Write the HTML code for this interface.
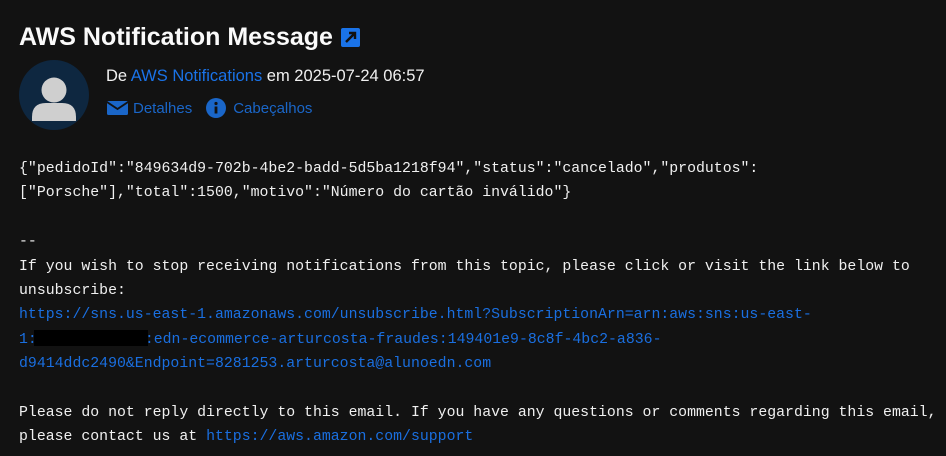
<!DOCTYPE html>
<html><head><meta charset="utf-8"><style>
body{margin:0;background:#121212;width:946px;height:456px;overflow:hidden;font-family:"Liberation Sans",sans-serif;color:#f0f0f0}
h1{position:absolute;left:19px;top:20px;margin:0;font-size:25px;font-weight:bold;color:#fafafa;line-height:34px}
.ext{display:inline-block;vertical-align:middle;margin-left:8px;position:relative;top:-1px}
.av{position:absolute;left:19px;top:60px;width:70px;height:70px;border-radius:50%;background:#0e2740;overflow:hidden}
.meta{position:absolute;left:106px;top:67px;font-size:16.5px;color:#f0f0f0}
.blue{color:#1a73e8}
.links{position:absolute;left:107px;top:98px;font-size:15px;color:#1a66c8;display:flex;align-items:center}
.links span{display:inline-flex;align-items:center;margin-right:14px}
pre{position:absolute;left:19px;top:157px;margin:0;font-family:"Liberation Mono",monospace;font-size:14.85px;line-height:24.4px;color:#f0f0f0;white-space:pre}
a{color:#1a6fe0;text-decoration:none}
.red{display:inline-block;width:114px;height:16px;background:#000;vertical-align:middle;position:relative;top:-1px;margin-left:-3px;margin-right:-3px}
</style></head><body>
<h1>AWS Notification Message<svg class="ext" width="19" height="19" viewBox="0 0 19 19"><rect width="19" height="19" rx="2" fill="#1a73e8"/><path d="M5 14L13 6M8 5h6v6" stroke="#111" stroke-width="2.4" fill="none"/></svg></h1>
<div class="av"><svg width="70" height="70" viewBox="0 0 70 70"><circle cx="35" cy="30" r="12.5" fill="#cfcfcf"/><path d="M13 57q0-14 14-14h16q14 0 14 14v4h-44z" fill="#cfcfcf"/></svg></div>
<div class="meta">De <span class="blue">AWS Notifications</span> em 2025-07-24 06:57</div>
<div class="links"><span><svg width="21" height="16" viewBox="0 0 21 16" style="margin-right:5px"><rect x="0" y="1" width="21" height="14" rx="1.5" fill="#1a66c8"/><path d="M0 2l10.5 7L21 2" stroke="#121212" stroke-width="1.8" fill="none"/></svg>Detalhes</span><span><svg width="20" height="20" viewBox="0 0 20 20" style="margin-right:7px"><circle cx="10" cy="10" r="10" fill="#1a66c8"/><rect x="8.6" y="8.5" width="2.8" height="7" fill="#121212"/><circle cx="10" cy="5.5" r="1.6" fill="#121212"/></svg>Cabeçalhos</span></div>
<pre>{"pedidoId":"849634d9-702b-4be2-badd-5d5ba1218f94","status":"cancelado","produtos":
["Porsche"],"total":1500,"motivo":"Número do cartão inválido"}

--
If you wish to stop receiving notifications from this topic, please click or visit the link below to
unsubscribe:
<a>https://sns.us-east-1.amazonaws.com/unsubscribe.html?SubscriptionArn=arn:aws:sns:us-east-</a>
<a>1:</a><span class="red"></span><a>:edn-ecommerce-arturcosta-fraudes:149401e9-8c8f-4bc2-a836-</a>
<a>d9414ddc2490&amp;Endpoint=8281253.arturcosta@alunoedn.com</a>

Please do not reply directly to this email. If you have any questions or comments regarding this email,
please contact us at <a>https://aws.amazon.com/support</a></pre>
</body></html>
